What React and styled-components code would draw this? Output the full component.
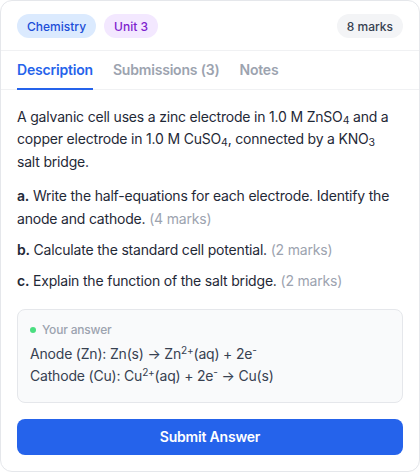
import React from "react";
import styled, { createGlobalStyle } from "styled-components";

const GlobalStyle = createGlobalStyle`
  * { box-sizing: border-box; }
  body {
    margin: 0;
    background: #ffffff;
    font-family: Inter, "Noto Sans", "Liberation Sans", sans-serif;
    letter-spacing: -0.012em;
    -webkit-font-smoothing: antialiased;
  }
`;

const Card = styled.article`
  width: 420px;
  background: #fff;
  border: 1px solid #e5e7eb;
  border-radius: 12px;
  overflow: hidden;
`;

const Header = styled.header`
  display: flex;
  align-items: center;
  gap: 8px;
  padding: 13px 16px 12px;
  border-bottom: 1px solid #f0f1f3;
`;

const tones = {
  blue: { bg: "#dbeafe", fg: "#1d4ed8" },
  purple: { bg: "#f3e8ff", fg: "#7e22ce" },
  gray: { bg: "#f3f4f6", fg: "#374151" },
};

const Pill = styled.span`
  display: inline-flex;
  align-items: center;
  height: 24px;
  padding: 0 10px;
  border-radius: 999px;
  font-size: 12px;
  font-weight: 500;
  letter-spacing: 0;
  background: ${(p) => tones[p.$tone].bg};
  color: ${(p) => tones[p.$tone].fg};
  margin-left: ${(p) => (p.$push ? "auto" : "0")};
`;

const Tabs = styled.nav`
  display: flex;
  gap: 20px;
  padding: 0 16px;
  border-bottom: 1px solid #f0f1f3;
`;

const Tab = styled.button`
  border: none;
  background: none;
  font-family: inherit;
  letter-spacing: inherit;
  font-size: 14px;
  font-weight: 600;
  line-height: 20px;
  padding: 9px 0 8px;
  margin-bottom: -1px;
  cursor: pointer;
  color: ${(p) => (p.$active ? "#2563eb" : "#9ca3af")};
  border-bottom: 2px solid ${(p) => (p.$active ? "#2563eb" : "transparent")};
`;

const Body = styled.section`
  padding: 16px 16px 16px;
  color: #1f2937;
  font-size: 14px;
  line-height: 1.6;
`;

const Intro = styled.p`
  max-width: 376px;
  margin: 0 0 12px;
`;

const Part = styled.p`
  margin: 0 0 9px;
  b {
    font-weight: 600;
  }
`;

const Marks = styled.span`
  color: #9ca3af;
`;

const Sub = styled.sub`
  font-size: 0.75em;
  line-height: 0;
  vertical-align: -0.15em;
`;

const Sup = styled.sup`
  font-size: 0.72em;
  line-height: 0;
  vertical-align: 0.5em;
`;

const Answer = styled.div`
  margin-top: 16px;
  padding: 12px 12px 14px;
  background: #f9fafb;
  border: 1px solid #e5e7eb;
  border-radius: 8px;
  color: #374151;
`;

const AnswerLabel = styled.div`
  display: flex;
  align-items: center;
  gap: 6px;
  font-size: 12px;
  line-height: 16px;
  font-weight: 500;
  color: #9ca3af;
  margin-bottom: 5px;
  &::before {
    content: "";
    width: 6px;
    height: 6px;
    border-radius: 50%;
    background: #4ade80;
  }
`;

const AnswerLine = styled.div``;

const Submit = styled.button`
  display: block;
  width: 100%;
  height: 36px;
  margin-top: 16px;
  border: none;
  border-radius: 8px;
  background: #2563eb;
  color: #fff;
  font-family: inherit;
  letter-spacing: inherit;
  font-size: 14px;
  font-weight: 600;
  cursor: pointer;
`;

const parts = [
  { key: "a.", text: "Write the half-equations for each electrode. Identify the anode and cathode.", marks: 4 },
  { key: "b.", text: "Calculate the standard cell potential.", marks: 2 },
  { key: "c.", text: "Explain the function of the salt bridge.", marks: 2 },
];

export default function App() {
  const [tab, setTab] = React.useState("Description");
  const tabs = ["Description", "Submissions (3)", "Notes"];

  return (
    <>
      <GlobalStyle />
      <Card>
        <Header>
          <Pill $tone="blue">Chemistry</Pill>
          <Pill $tone="purple">Unit 3</Pill>
          <Pill $tone="gray" $push>8 marks</Pill>
        </Header>
        <Tabs>
          {tabs.map((t) => (
            <Tab key={t} $active={t === tab} onClick={() => setTab(t)}>
              {t}
            </Tab>
          ))}
        </Tabs>
        <Body>
          <Intro>
            A galvanic cell uses a zinc electrode in 1.0 M ZnSO<Sub>4</Sub> and a copper electrode in 1.0 M
            CuSO<Sub>4</Sub>, connected by a KNO<Sub>3</Sub> salt bridge.
          </Intro>
          {parts.map((p) => (
            <Part key={p.key}>
              <b>{p.key}</b> {p.text} <Marks>({p.marks} marks)</Marks>
            </Part>
          ))}
          <Answer>
            <AnswerLabel>Your answer</AnswerLabel>
            <AnswerLine>
              Anode (Zn): Zn(s) → Zn<Sup>2+</Sup>(aq) + 2e<Sup>-</Sup>
            </AnswerLine>
            <AnswerLine>
              Cathode (Cu): Cu<Sup>2+</Sup>(aq) + 2e<Sup>-</Sup> → Cu(s)
            </AnswerLine>
          </Answer>
          <Submit>Submit Answer</Submit>
        </Body>
      </Card>
    </>
  );
}
